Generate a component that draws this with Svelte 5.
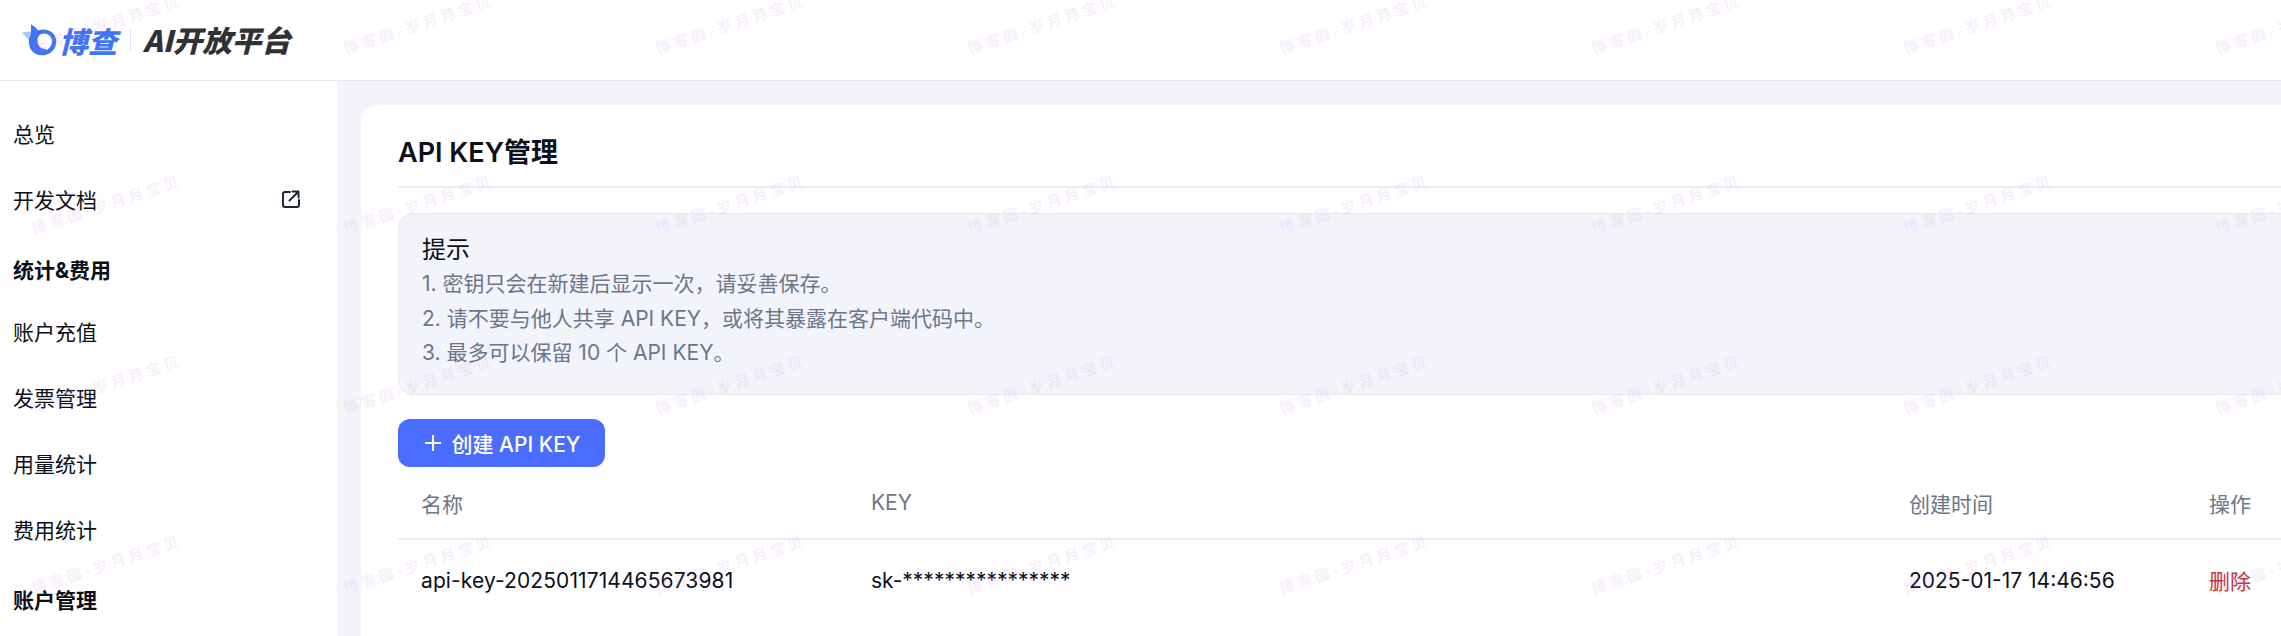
<script>
	const topLinks = [
		{ label: '总览' },
		{ label: '开发文档', external: true }
	];
	const groups = [
		{ title: '统计&费用', items: ['账户充值', '发票管理', '用量统计', '费用统计'] },
		{ title: '账户管理', items: [] }
	];
	const tips = [
		'1. 密钥只会在新建后显示一次，请妥善保存。',
		'2. 请不要与他人共享 API KEY，或将其暴露在客户端代码中。',
		'3. 最多可以保留 10 个 API KEY。'
	];
	const keys = [
		{
			name: 'api-key-2025011714465673981',
			key: 'sk-****************',
			created: '2025-01-17 14:46:56'
		}
	];
	const marks = Array.from({ length: 32 });
</script>

<div class="page">
	<header class="topbar">
		<svg class="logo-mark" viewBox="0 0 38 32" aria-hidden="true">
			<path class="wing" d="M1 8.500 13 7l6 18-7-4Z" />
			<path class="stem" d="M10 .5c3 1.500 6 4 7 6 6-2.500 14-.5 17 5.500 3.500 7-.5 17-10 19-8 1.500-15-3-16-11-.5-4 .5-7 2-10Z" />
			<path class="hole" d="M23 9.500c4.500 0 8 3.500 8 7.500 0 3-1 5.500-3.500 7.500l-1 1.500-2-1c-4.500 0-8-3.500-8-8s2-7.500 6.500-7.500Z" />
		</svg>
		<span class="brand">博查</span>
		<span class="logo-sep"></span>
		<span class="product">AI开放平台</span>
	</header>

	<div class="body">
		<nav class="sidebar">
			{#each topLinks as link}
				<a class="nav-item" href="#top">
					<span>{link.label}</span>
					{#if link.external}
						<svg class="ext" viewBox="0 0 18 18" aria-hidden="true">
							<path d="M8 2H3a2 2 0 0 0-2 2v11a2 2 0 0 0 2 2h12a2 2 0 0 0 2-2v-5" />
							<path d="M7.500 10.500 16.500 1.500M10.500 1.500h6v6" />
						</svg>
					{/if}
				</a>
			{/each}
			{#each groups as group}
				<div class="nav-group">{group.title}</div>
				{#each group.items as item}
					<a class="nav-item" href="#top">{item}</a>
				{/each}
			{/each}
		</nav>

		<main class="main">
			<section class="card">
				<h1>API KEY管理</h1>

				<div class="notice">
					<div class="notice-title">提示</div>
					{#each tips as tip}
						<p>{tip}</p>
					{/each}
				</div>

				<button class="create" type="button">
					<svg viewBox="0 0 16 16" aria-hidden="true"><path d="M8 0v16M0 8h16" /></svg>
					创建 API KEY
				</button>

				<table>
					<colgroup>
						<col class="col-name" />
						<col class="col-key" />
						<col class="col-time" />
						<col />
					</colgroup>
					<thead>
						<tr>
							<th>名称</th>
							<th>KEY</th>
							<th>创建时间</th>
							<th>操作</th>
						</tr>
					</thead>
					<tbody>
						{#each keys as row}
							<tr>
								<td class="key-name">{row.name}</td>
								<td>{row.key}</td>
								<td>{row.created}</td>
								<td><a class="remove" href="#top">删除</a></td>
							</tr>
						{/each}
					</tbody>
				</table>
			</section>
		</main>
	</div>

	<div class="watermarks" aria-hidden="true">
		{#each marks as _}
			<span>博客园-岁月月宝贝</span>
		{/each}
	</div>
</div>

<style>
	:global(body) {
		margin: 0;
		background: #ffffff;
	}

	.page {
		position: relative;
		height: 636px;
		overflow: hidden;
		font-family: Inter, 'Noto Sans CJK SC', sans-serif;
		font-size: 21px;
		color: #0b0f19;
	}

	.topbar {
		height: 80px;
		display: flex;
		align-items: center;
		border-bottom: 1px solid #e3e8f2;
		padding-left: 21px;
	}

	.logo-mark {
		width: 38px;
		height: 32px;
	}

	.wing {
		fill: #a9c6fb;
	}

	.stem {
		fill: #3f74f2;
	}

	.hole {
		fill: #ffffff;
	}

	.brand,
	.product {
		font-family: 'Noto Sans CJK SC', sans-serif;
		font-style: italic;
		font-weight: 900;
		line-height: 1;
	}

	.brand {
		font-size: 29px;
		color: #3f74f2;
	}

	.logo-sep {
		width: 1px;
		height: 22px;
		margin: 0 12px 0 13px;
		background: #dbe6f6;
	}

	.product {
		font-size: 29.500px;
		color: #2f3136;
	}

	.body {
		display: flex;
	}

	.sidebar {
		width: 337px;
		flex: none;
		box-sizing: border-box;
		height: 555px;
		padding: 19px 37px 0 13px;
		background: #ffffff;
	}

	.nav-item {
		height: 66px;
		display: flex;
		align-items: center;
		justify-content: space-between;
		color: #0b0f19;
		text-decoration: none;
	}

	.nav-group {
		height: 66px;
		box-sizing: border-box;
		padding-top: 8px;
		display: flex;
		align-items: center;
		font-weight: 700;
	}

	.ext {
		width: 18px;
		height: 18px;
		fill: none;
		stroke: #1f2533;
		stroke-width: 2;
		stroke-linecap: round;
		stroke-linejoin: round;
	}

	.main {
		flex: 1;
		min-width: 0;
		height: 555px;
		padding: 24px 0 0 24px;
		background: #f2f4fa;
	}

	.card {
		width: 1960px;
		height: 600px;
		box-sizing: border-box;
		padding: 0 0 0 37px;
		border-radius: 18px 0 0 0;
		background: #ffffff;
	}

	h1 {
		height: 81px;
		margin: 0;
		border-bottom: 2px solid #eceef5;
		font-size: 27px;
		font-weight: 600;
		line-height: 96px;
	}

	.notice {
		height: 182px;
		box-sizing: border-box;
		margin-top: 25px;
		padding: 18px 23px 0;
		border: 1px solid #e6e9f2;
		border-radius: 15px;
		background: #f2f4fa;
	}

	.notice-title {
		font-size: 24px;
		line-height: 35px;
	}

	.notice p {
		margin: 0;
		color: #6b7689;
		line-height: 34.500px;
	}

	.create {
		width: 207px;
		height: 48px;
		display: flex;
		align-items: center;
		justify-content: center;
		gap: 10px;
		margin-top: 24px;
		padding: 0 0 0 3px;
		border: 0;
		border-radius: 12px;
		background: #4a6cff;
		color: #ffffff;
		font: inherit;
		font-weight: 500;
	}

	.create svg {
		width: 16px;
		height: 16px;
		flex: none;
		fill: none;
		stroke: #ffffff;
		stroke-width: 2;
	}

	table {
		width: 100%;
		table-layout: fixed;
		border-collapse: collapse;
	}

	.col-name {
		width: 450px;
	}

	.col-key {
		width: 1038px;
	}

	.col-time {
		width: 300px;
	}

	th,
	td {
		padding: 0 0 0 23px;
		text-align: left;
		white-space: nowrap;
	}

	th {
		height: 71px;
		border-bottom: 2px solid #eceef5;
		color: #6b7689;
		font-weight: 400;
	}

	td {
		height: 80px;
	}

	.key-name {
		letter-spacing: 0.100px;
	}

	.remove {
		color: #c2303a;
		text-decoration: none;
	}

	.watermarks {
		position: absolute;
		top: -67px;
		left: -49px;
		display: grid;
		grid-template-columns: repeat(8, 312px);
		grid-auto-rows: 180px;
		place-items: center;
		pointer-events: none;
	}

	.watermarks span {
		transform: rotate(-18deg);
		font-family: 'Noto Sans CJK SC', sans-serif;
		font-size: 15px;
		font-weight: 700;
		letter-spacing: 3.500px;
		white-space: nowrap;
		color: rgba(215, 125, 245, 0.15);
	}
</style>
